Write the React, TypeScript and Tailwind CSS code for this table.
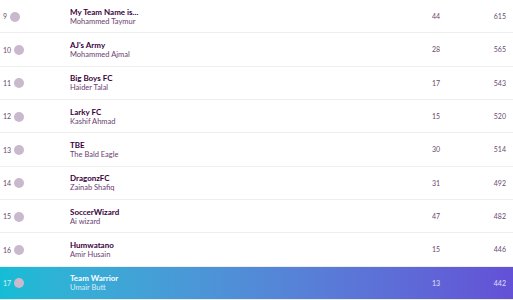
import React from 'react'

interface Entry {
  rank: number;
  team: string;
  manager: string;
  gw: number;
  total: number;
}

const entries: Entry[] = [
  { rank: 9, team: 'My Team Name is...', manager: 'Mohammed Taymur', gw: 44, total: 615 },
  { rank: 10, team: "AJ's Army", manager: 'Mohammed Ajmal', gw: 28, total: 565 },
  { rank: 11, team: 'Big Boys FC', manager: 'Haider Talal', gw: 17, total: 543 },
  { rank: 12, team: 'Larky FC', manager: 'Kashif Ahmad', gw: 15, total: 520 },
  { rank: 13, team: 'TBE', manager: 'The Bald Eagle', gw: 30, total: 514 },
  { rank: 14, team: 'DragonzFC', manager: 'Zainab Shafiq', gw: 31, total: 492 },
  { rank: 15, team: 'SoccerWizard', manager: 'Ai wizard', gw: 47, total: 482 },
  { rank: 16, team: 'Humwatano', manager: 'Amir Husain', gw: 15, total: 446 },
  { rank: 17, team: 'Team Warrior', manager: 'Umair Butt', gw: 13, total: 442 },
]

const Row = ({ e, active }: { e: Entry; active: boolean }) => {
  const num = active ? 'text-white/80' : 'text-[#6a4a6e]'
  return (
    <div
      className={
        active
          ? 'grid h-[33.34px] grid-cols-[70px_1fr_30px_62px] items-center border-b border-[#eeeeee] bg-gradient-to-r from-[#13bdd5] to-[#6350d6]'
          : 'grid h-[33.34px] grid-cols-[70px_1fr_30px_62px] items-center border-b border-[#eeeeee] bg-white'
      }
    >
      <div className="flex items-center pl-[3px] pt-[1px]">
        <span className={`text-[7px] ${num}`}>{e.rank}</span>
        <span className="ml-[3px] h-[10px] w-[10px] rounded-full bg-[#c9b9cd]" />
      </div>
      <div className="flex min-w-0 flex-col pt-[1px] leading-[10px]">
        <span className={`text-[8px] font-bold ${active ? 'text-white' : 'text-[#37003c]'}`}>{e.team}</span>
        <span className={`text-[7.5px] ${active ? 'text-white/80' : 'text-[#6a3d70]'}`}>{e.manager}</span>
      </div>
      <div className={`text-center text-[7px] ${num}`}>{e.gw}</div>
      <div className={`pr-[7px] text-right text-[7px] ${num}`}>{e.total}</div>
    </div>
  )
}

export default function App() {
  return (
    <div className="h-[300px] w-[513px] overflow-hidden bg-white" style={{ fontFamily: 'Lato, "Noto Sans", sans-serif' }}>
      {entries.map((e) => (
        <Row key={e.rank} e={e} active={e.rank === 17} />
      ))}
    </div>
  )
}
